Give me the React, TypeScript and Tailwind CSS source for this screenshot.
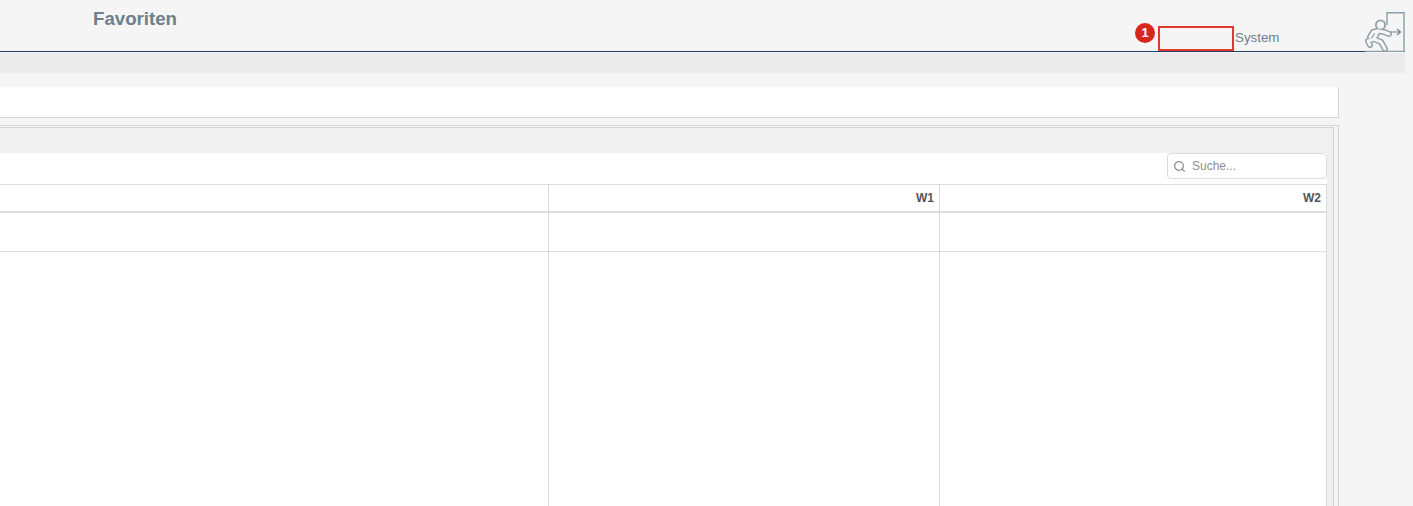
import { Search } from "lucide-react";

function ExitIcon() {
    return (
        <svg width="40" height="40" viewBox="0 0 40 40" fill="none" className="block shrink-0">
            <path d="M0 39.4H39V0.8H22V13" stroke="#8b9eaa" strokeWidth="1.4" />
            <path d="M25 20H35M32 17L35.5 20L32 23" stroke="#6f8592" strokeWidth="1.2" />
            <g stroke="#8f9fa8" strokeWidth="6" strokeLinecap="round" strokeLinejoin="round">
                <path d="M13 19L9 27L3 29L5 33" />
                <path d="M9 27L16 30L20 37" />
                <path d="M13 19L19 20L24 22" />
                <path d="M13 19L8 20L5 25" />
            </g>
            <circle cx="15.5" cy="13" r="4.6" fill="#f5f5f5" stroke="#8f9fa8" strokeWidth="1.8" />
            <g stroke="#f5f5f5" strokeWidth="3" strokeLinecap="round" strokeLinejoin="round">
                <path d="M13 19L9 27L3 29L5 33" />
                <path d="M9 27L16 30L20 37" />
                <path d="M13 19L19 20L24 22" />
                <path d="M13 19L8 20L5 25" />
            </g>
        </svg>
    );
}

export default function App() {
    return (
        <div className="h-[506px] w-[1413px] overflow-hidden bg-[#f5f5f5] font-['Liberation_Sans',Arial,sans-serif]">
            <div className="flex h-[52px] w-[1405px] border-b border-[#1d3f66]">
                <div className="pl-[93px] pt-[8px] text-[18.67px] leading-[21px] font-bold text-[#6d808c]">Favoriten</div>
                <div className="ml-auto flex items-end">
                    <div className="mr-[3px] mb-[8px] flex h-[20px] w-[20px] items-center justify-center rounded-full bg-[#d9261c] text-[13px] font-bold text-white">1</div>
                    <div className="h-[25px] w-[76px] border-2 border-[#e03a2e]"></div>
                    <div className="mb-[5px] ml-[1px] w-[130px] text-[13.33px] leading-[17px] text-[#6d808c]">System</div>
                    <div className="-mb-[1px]"><ExitIcon /></div>
                </div>
            </div>
            <div className="mt-[1px] h-[20px] w-[1405px] bg-[#ebebeb]"></div>
            <div className="mt-[14px] h-[31px] w-[1339px] border-r border-b border-[#d4d4d4] bg-white"></div>
            <div className="mt-[7px] h-[400px] w-[1339px] border-t border-r border-[#d4d4d4] pt-[1px] pr-[4px]">
                <div className="h-full w-full border-t border-r border-[#d4d4d4] bg-[#f0f0f0] pr-[6px]">
                    <div className="h-[25px]"></div>
                    <div className="flex h-[31px] items-start justify-end bg-white">
                        <div className="flex h-[26px] w-[160px] items-center rounded-[4px] border border-[#dddddd] bg-white pl-[5px]">
                            <Search size={13} strokeWidth={2.4} className="text-[#8f8f8f]" />
                            <span className="ml-[6px] text-[12px] text-[#8f8f8f]">Suche...</span>
                        </div>
                    </div>
                    <div className="h-full border-r border-[#d9d9d9] bg-white">
                        <div className="flex h-[29px] border-t border-b-2 border-[#dddddd]">
                            <div className="w-[549px] border-r border-[#d9d9d9]"></div>
                            <div className="w-[391px] border-r border-[#d9d9d9] pt-[6px] pr-[5px] text-right text-[12px] leading-[14px] font-bold text-[#555555]">W1</div>
                            <div className="flex-1 pt-[6px] pr-[5px] text-right text-[12px] leading-[14px] font-bold text-[#555555]">W2</div>
                        </div>
                        <div className="flex h-[39px] border-b border-[#dddddd]">
                            <div className="w-[549px] border-r border-[#d9d9d9]"></div>
                            <div className="w-[391px] border-r border-[#d9d9d9]"></div>
                        </div>
                        <div className="flex h-[260px]">
                            <div className="w-[549px] border-r border-[#d9d9d9]"></div>
                            <div className="w-[391px] border-r border-[#d9d9d9]"></div>
                        </div>
                    </div>
                </div>
            </div>
        </div>
    );
}
